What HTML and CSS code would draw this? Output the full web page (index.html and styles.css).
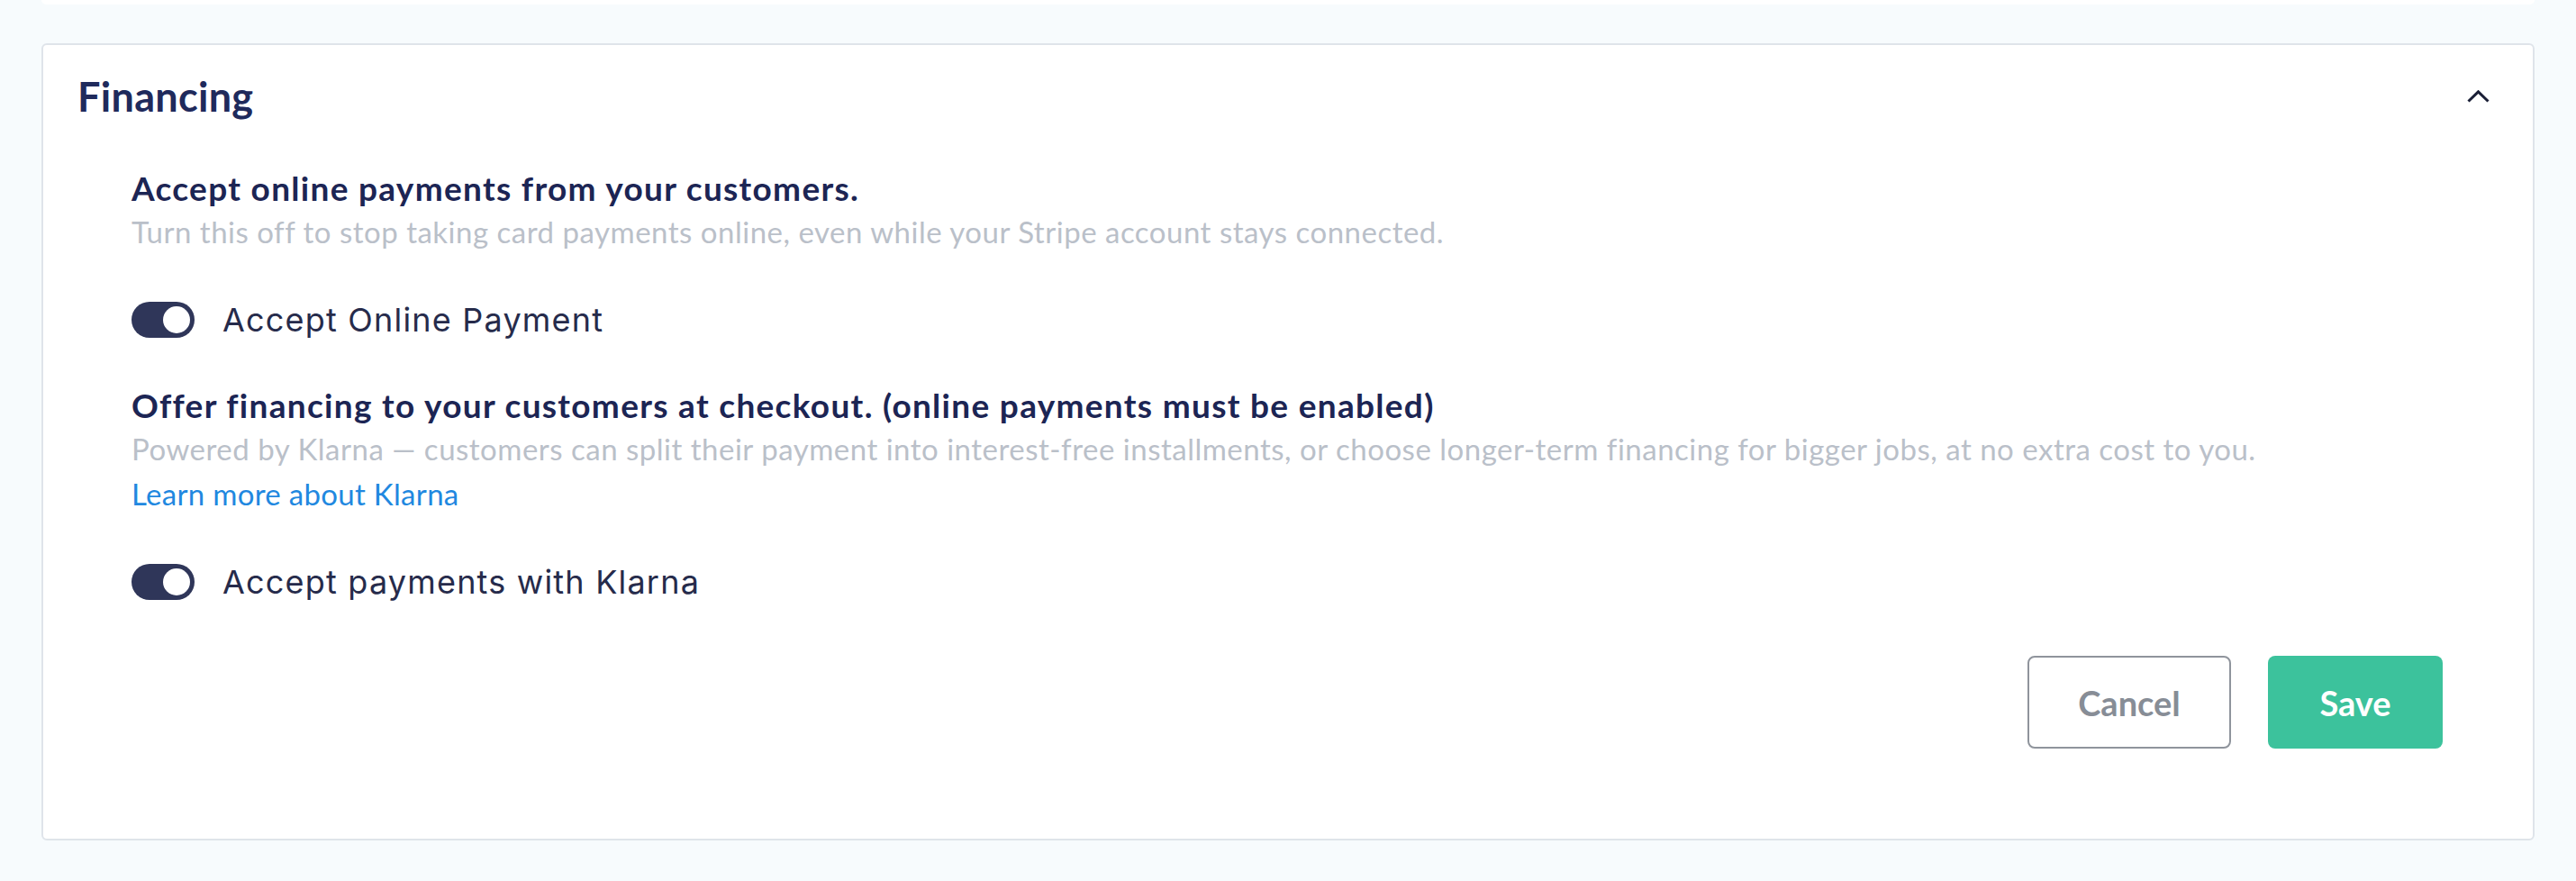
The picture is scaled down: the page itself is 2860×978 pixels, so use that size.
FILE: index.html
```html
<!DOCTYPE html>
<html lang="en">
	<head>
		<meta charset="UTF-8">
		<title>Financing</title>
		<link rel="stylesheet" href="styles.css">
	</head>
	<body>
		<div class="prev-card"></div>
		<div class="panel">
			<div class="panel-head">
				<h2>Financing</h2>
				<svg class="chevron" width="25" height="14" viewBox="0 0 25 14">
					<path d="M1.5 12.5 L12.5 1.8 L23.5 12.5" fill="none" stroke="#1a1f36" stroke-width="3" />
				</svg>
			</div>
			<div class="panel-body">
				<div class="option">
					<h3>Accept online payments from your customers.</h3>
					<p class="desc">Turn this off to stop taking card payments online, even while your Stripe account stays connected.</p>
					<label class="switch-row">
						<span class="switch on"><span class="knob"></span></span>
						<span class="switch-text">Accept Online Payment</span>
					</label>
				</div>
				<div class="option">
					<h3>Offer financing to your customers at checkout. (online payments must be enabled)</h3>
					<p class="desc">Powered by Klarna — customers can split their payment into interest-free installments, or choose longer-term financing for bigger jobs, at no extra cost to you.</p>
					<a class="more" href="javascript:;">Learn more about Klarna</a>
					<label class="switch-row">
						<span class="switch on"><span class="knob"></span></span>
						<span class="switch-text">Accept payments with Klarna</span>
					</label>
				</div>
				<div class="actions">
					<button class="btn btn-cancel">Cancel</button>
					<button class="btn btn-save">Save</button>
				</div>
			</div>
		</div>
	</body>
</html>
```

FILE: styles.css
```css
body,
h2,
h3,
p {
	margin: 0;
	padding: 0;
}

body {
	background: #f7fbfd;
	font-family: Lato, "Noto Sans", sans-serif;
}

.prev-card {
	height: 5px;
	margin: 0 46px;
	background: #fff;
	border-radius: 0 0 6px 6px;
}

.panel {
	margin: 43px 46px 0;
	background: #fff;
	border: 2px solid #dfe4ea;
	border-radius: 6px;
	height: 885px;
	box-sizing: border-box;
}

.panel-head {
	display: flex;
	align-items: center;
	justify-content: space-between;
	padding: 27px 48px 0 38px;
}

.panel-head h2 {
	font-size: 45px;
	line-height: 60px;
	font-weight: 700;
	color: #1f2a5c;
	letter-spacing: 0.3px;
}

.chevron {
	display: block;
}

.panel-body {
	padding: 50px 100px 0 98px;
}

.option h3 {
	font-size: 37px;
	line-height: 44px;
	font-weight: 700;
	color: #1c2554;
	letter-spacing: 1.3px;
}

.option .desc {
	margin-top: 6px;
	font-size: 33px;
	line-height: 40px;
	color: #bac0c9;
	letter-spacing: 0.5px;
}

.more {
	display: block;
	margin-top: 10px;
	font-size: 33px;
	line-height: 40px;
	color: #2188e0;
	text-decoration: none;
	letter-spacing: 0.3px;
}

.switch-row {
	display: flex;
	align-items: center;
	gap: 31px;
	margin-top: 56px;
	margin-bottom: 51px;
}

.switch {
	width: 70px;
	height: 40px;
	border-radius: 20px;
	background: #2f3659;
	position: relative;
	flex: none;
}

.switch .knob {
	position: absolute;
	top: 5px;
	right: 5px;
	width: 30px;
	height: 30px;
	border-radius: 50%;
	background: #fff;
}

.switch-text {
	font-family: Inter, "Noto Sans", sans-serif;
	font-size: 36px;
	color: #262b4b;
	letter-spacing: 1.2px;
}

.actions {
	display: flex;
	justify-content: flex-end;
	gap: 41px;
	margin-top: 60px;
}

.btn {
	height: 103px;
	border-radius: 8px;
	font-family: Lato, "Noto Sans", sans-serif;
	font-size: 38px;
	font-weight: 700;
	cursor: pointer;
}

.btn-cancel {
	width: 226px;
	background: #fff;
	border: 2px solid #8f949c;
	color: #878d96;
}

.btn-save {
	width: 194px;
	background: #3cc29c;
	border: none;
	color: #fff;
}
```
